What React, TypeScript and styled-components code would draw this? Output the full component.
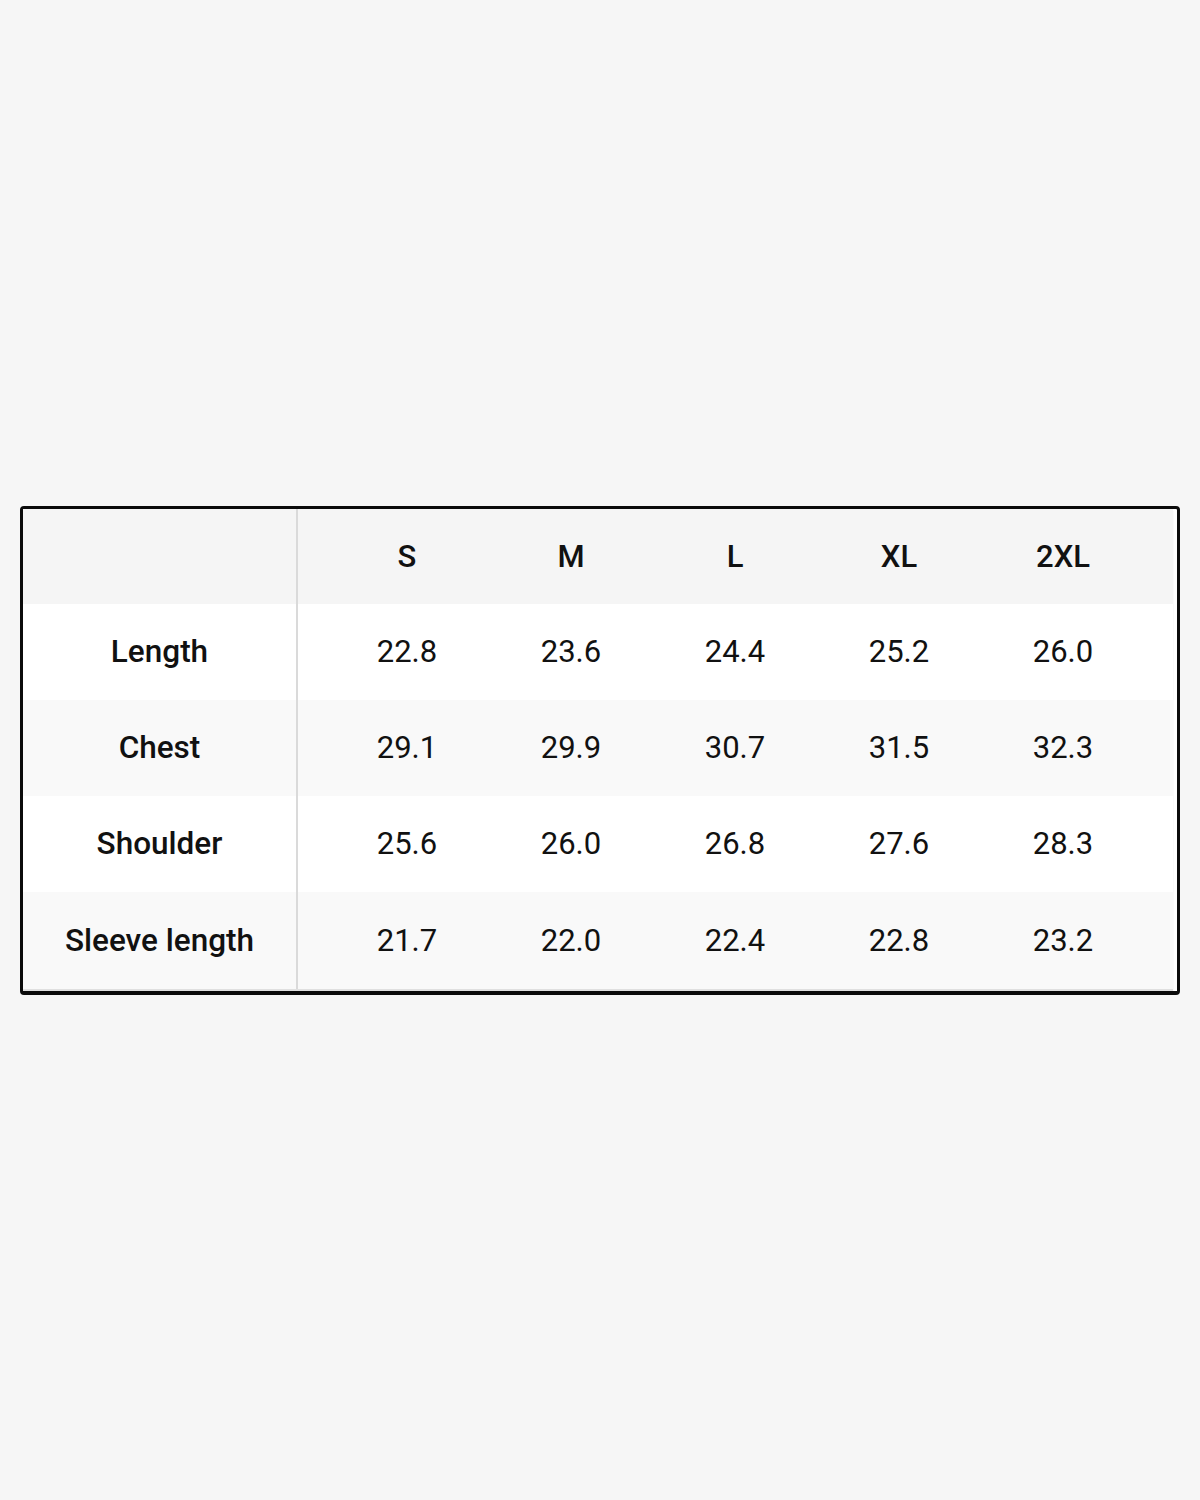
import React from 'react'
import styled, { createGlobalStyle } from 'styled-components'

const GlobalStyle = createGlobalStyle`
  html, body {
    margin: 0;
    padding: 0;
    background: #f6f6f6;
  }
  * {
    box-sizing: border-box;
  }
`

const Page = styled.main`
  height: 1500px;
  width: 1200px;
  display: flex;
  align-items: center;
  justify-content: center;
  font-family: Roboto, 'Liberation Sans', sans-serif;
  color: #111;
`

const Frame = styled.section`
  width: 1160px;
  border: 3px solid #0b0b0b;
  border-bottom-width: 4px;
  border-radius: 4px;
  background: #fff;
  padding: 0 4px 2px 0;
`

const Table = styled.div`
  width: 1150px;
  box-shadow: 0 2px 1px rgba(0, 0, 0, 0.12);
`

const Row = styled.div<{ $bg: string; $h: number }>`
  display: grid;
  grid-template-columns: 273px 2px 1fr;
  height: ${(p) => p.$h}px;
  background: ${(p) => p.$bg};
`

const Label = styled.div`
  display: flex;
  align-items: center;
  justify-content: center;
  font-size: 31.5px;
  font-weight: 500;
`

const Divider = styled.div`
  background: #dadada;
`

const Values = styled.div`
  display: grid;
  grid-template-columns: repeat(5, 164px);
  padding-left: 27px;
`

const Cell = styled.div<{ $bold?: boolean }>`
  display: flex;
  align-items: center;
  justify-content: center;
  font-size: 31px;
  font-weight: ${(p) => (p.$bold ? 500 : 400)};
`

const sizes = ['S', 'M', 'L', 'XL', '2XL']

const rows = [
  { label: 'Length', values: ['22.8', '23.6', '24.4', '25.2', '26.0'] },
  { label: 'Chest', values: ['29.1', '29.9', '30.7', '31.5', '32.3'] },
  { label: 'Shoulder', values: ['25.6', '26.0', '26.8', '27.6', '28.3'] },
  { label: 'Sleeve length', values: ['21.7', '22.0', '22.4', '22.8', '23.2'] },
]

export default function App() {
  return (
    <>
      <GlobalStyle />
      <Page>
        <Frame>
          <Table>
            <Row $bg='#f5f5f5' $h={95}>
              <Label />
              <Divider />
              <Values>
                {sizes.map((s) => (
                  <Cell key={s} $bold>
                    {s}
                  </Cell>
                ))}
              </Values>
            </Row>
            {rows.map((r, i) => (
              <Row key={r.label} $bg={i % 2 === 0 ? '#ffffff' : '#f9f9f9'} $h={i === 3 ? 97 : 96}>
                <Label>{r.label}</Label>
                <Divider />
                <Values>
                  {r.values.map((v, j) => (
                    <Cell key={j}>{v}</Cell>
                  ))}
                </Values>
              </Row>
            ))}
          </Table>
        </Frame>
      </Page>
    </>
  )
}
